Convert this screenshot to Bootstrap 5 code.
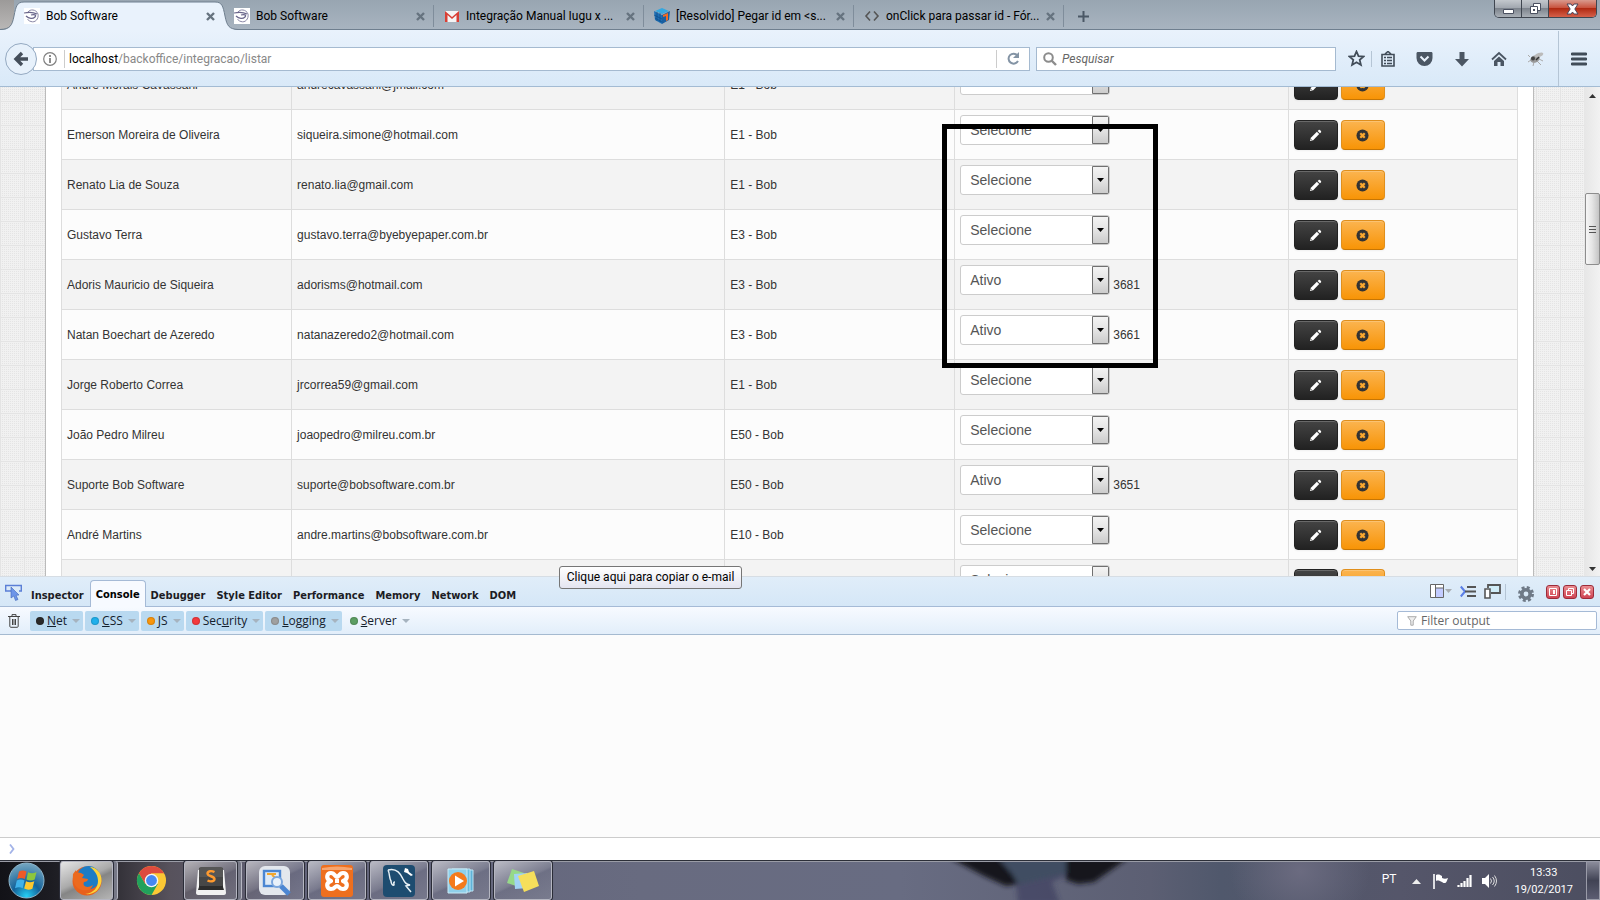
<!DOCTYPE html>
<html lang="pt-BR">
<head>
<meta charset="utf-8">
<meta name="viewport" content="width=device-width, initial-scale=1">
<title>Bob Software</title>
<link href="https://cdn.jsdelivr.net/npm/bootstrap@5.3.0/dist/css/bootstrap.min.css" rel="stylesheet">
<style>
  body { font-family: Roboto, "Open Sans", sans-serif; font-size: 12px; line-height: 16px; color: #000; }
  svg { display: block; flex: none; }
  button { font: inherit; color: inherit; }
  .plain-btn { border: 0; background: none; padding: 0; display: flex; align-items: center; justify-content: center; flex: none; }

  /* tab strip */
  .tab-strip { height: 30px; background: linear-gradient(#98a5b1, #a8b4c0); border-bottom: 1px solid #6f7f8f; padding-left: 14px; position: relative; }
  .tab-strip::before { content: ""; position: absolute; left: 0; top: 0; width: 14px; height: 29px; background: linear-gradient(#9c9a99, #b9b7b6); }
  .browser-tab { width: 210px; height: 29px; padding: 3px 9px 0 10px; gap: 6px; position: relative; }
  .browser-tab > a { color: #000; text-decoration: none; white-space: nowrap; flex: 1; min-width: 0; }
  .browser-tab.with-line::after { content: ""; position: absolute; right: 0; top: 5px; height: 22px; width: 1px; background: #7f8d9b; }
  .tab-shape { position: absolute; left: -14px; top: 0; }
  .browser-tab > a, .browser-tab > .fav, .browser-tab > button { position: relative; }
  .new-tab { width: 31px; padding-top: 3px; }
  .win-buttons { height: 18px; margin-right: 3px; border: 1px solid #3f4650; border-top: 0; border-radius: 0 0 5px 5px; overflow: hidden; }
  .win-buttons button { height: 17px; width: 27px; background: linear-gradient(#c3c8cd, #a2a8b0 45%, #7d848d 50%, #a9afb6); border-right: 1px solid #3f4650; }
  .win-buttons button:last-child { width: 47px; border: 0; background: linear-gradient(#d99a8d, #c9543f 45%, #b02a12 50%, #d5604a); }

  /* address bar */
  .nav-bar { height: 57px; background: linear-gradient(#e9f2fc, #d9e9f8); border-bottom: 1px solid #a3bbd3; padding: 1px 13px 0 5px; }
  .back-btn { width: 32px; height: 32px; border: 1px solid #94a9c1; border-radius: 50%; background: #e7f1fb; z-index: 1; }
  .url-field, .search-field { height: 24px; background: #fff; border: 1px solid #a5bad0; }
  .url-field { margin-left: -4px; padding-left: 9px; gap: 7px; }
  .search-field { width: 300px; margin-left: 6px; margin-right: 2px; padding-left: 6px; gap: 5px; }
  .url-text { color: #888; padding-left: 4px; border-left: 1px solid #ccc; height: 18px; line-height: 18px; }
  .search-field input { border: 0; outline: 0; background: none; font-style: italic; min-width: 0; padding: 0; }
  .search-field input::placeholder { color: #666; opacity: 1; }
  .reload-btn { width: 33px; height: 18px; border-left: 1px solid #ccc; }
  .tool-icon { width: 37px; height: 24px; }
  .v-line { width: 1px; height: 16px; background: #b5c5d5; }
  .v-line.beside-star { margin: 0 -3px 0 -4px; }

  /* web page */
  .viewport-area { background-color: #f1f1f1; min-height: 0; overflow: hidden;
    background-image: linear-gradient(90deg, #e4e4e4 1px, transparent 1px), linear-gradient(#e4e4e4 1px, transparent 1px), linear-gradient(90deg, transparent 1px, #f1f1f1 1px), linear-gradient(#e4e4e4 1px, transparent 1px);
    background-size: 24px 24px, 24px 24px, 2px 2px, 2px 2px; background-position: 0 14px; }
  .page-panel { background: #fff; border: solid #bbb; border-width: 0 1px; margin: 0 50px 0 45px; padding: 0 15px; overflow: hidden; min-width: 0; }
  .list-wrap { margin-top: -28px; position: relative; }
  .client-list { width: 100%; table-layout: fixed; border-collapse: separate; border-spacing: 0; border-right: 1px solid #ddd; font-family: "Liberation Sans", Arial, sans-serif; font-size: 12px; color: #333; }
  .client-list td { height: 50px; border-top: 1px solid #ddd; border-left: 1px solid #ddd; padding: 5px 5px 4px; vertical-align: middle; white-space: nowrap; }
  .client-list tr:nth-child(odd) td { background: #f3f3f3; }
  .client-list tr:nth-child(even) td { background: #fcfcfc; }
  .client-list select { width: 150px; height: 30px; margin-bottom: 10px; padding: 0 22px 0 9px; border: 1px solid #ccc; border-radius: 3px; font-family: inherit; font-size: 14px; color: #555; appearance: none;
    background: #fff url("data:image/svg+xml,%3Csvg xmlns='http://www.w3.org/2000/svg' width='18' height='28'%3E%3Cdefs%3E%3ClinearGradient id='g' x2='0' y2='1'%3E%3Cstop stop-color='%23f4f4f4'/%3E%3Cstop offset='.5' stop-color='%23e4e4e4'/%3E%3Cstop offset='1' stop-color='%23cbcbcb'/%3E%3C/linearGradient%3E%3C/defs%3E%3Cpath d='M1.500.5h16v27h-16z' fill='url(%23g)' stroke='%23707070'/%3E%3Cpath d='M6 12h7l-3.500 4z'/%3E%3C/svg%3E") right 0 center no-repeat; }
  .status-cell { display: flex; align-items: center; gap: 3px; }
  .act-btn { width: 44px; height: 30px; border-radius: 4px; display: inline-flex; align-items: center; justify-content: center; padding: 0; box-shadow: inset 0 1px 0 rgba(255,255,255,.2), 0 1px 2px rgba(0,0,0,.05); }
  .act-dark { border: 1px solid #222; background: linear-gradient(#444, #222); }
  .act-orange { margin-left: 3px; border: 1px solid #e08f1c; border-bottom-color: #c67605; background: linear-gradient(#fbb450, #f89406); }
  .marker-box { position: absolute; left: 881px; top: 65px; width: 216px; height: 244px; border: 5px solid #000; }
  .scroll-track { width: 16px; background: linear-gradient(90deg, #e6e6e6, #f2f2f2); padding: 7px 0 5px; }
  .scroll-thumb { width: 15px; height: 72px; border: 1px solid #8d8d8d; border-radius: 2px; background: linear-gradient(90deg, #f6f6f6, #e6e6e6 45%, #c4c4c4); margin-top: 95px; }

  /* developer tools */
  .dev-tabs { height: 31px; border-top: 1px solid #d6dde4; border-bottom: 1px solid #a5bad6; background: linear-gradient(#e0edf9, #d5e7f7); padding: 0 6px 0 5px; }
  .dev-tabs a { color: #1c1c24; text-decoration: none; font: bold 11px/16px "DejaVu Sans Condensed", "DejaVu Sans", sans-serif; padding: 8px 6px 0 5px; }
  .dev-tabs a.current { color: #000; background: #f7faff; border: 1px solid #a5bad6; border-bottom: 0; border-radius: 4px 4px 0 0; height: 27px; padding: 6px 5px 0 5px; align-self: flex-end; margin-bottom: -1px; }
  .red-btn { width: 14px; height: 14px; border: 1px solid #9c2b39; border-radius: 3px; background: linear-gradient(#ea8d92, #cf4453); margin-left: 3px; }
  .dev-filters { height: 28px; border-bottom: 1px solid #a5bad0; background: linear-gradient(#f7faff, #e2eefa); padding: 0 3px 0 8px; gap: 2px; font-family: "Open Sans", sans-serif; }
  .filter-btn { height: 20px; border: 0; border-radius: 2px; padding: 0 3px 0 6px; display: flex; align-items: center; background: none; color: #14202c; }
  .filter-btn.on { background: #b9d9f0; }
  .filter-btn i { width: 8px; height: 8px; border-radius: 50%; margin-right: 3px; box-shadow: inset 0 0 1px 1px rgba(0,0,0,.15); }
  .filter-btn::after { content: ""; border: 4px solid transparent; border-top-color: #a6b3bf; border-bottom: 0; margin-left: 5px; }
  .filter-field { width: 200px; height: 19px; border: 1px solid #a5bad6; border-radius: 2px; background: #fff; padding-left: 9px; gap: 4px; }
  .filter-field input { border: 0; outline: 0; padding: 0; min-width: 0; height: 16px; background: none; }
  .filter-field input::placeholder { color: #666; opacity: 1; }
  .console-out { height: 202px; background: #fcfcfc; }
  .console-in { height: 23px; border-top: 1px solid #ccc; background: #fff; padding-left: 9px; }
  .page-tip { position: absolute; left: 559px; top: -10px; width: 183px; height: 23px; line-height: 21px; text-align: center; border: 1px solid #767676; border-radius: 3px; background: linear-gradient(#fff, #e4e5f0); white-space: nowrap; }

  /* task bar */
  .task-bar { height: 40px; border-top: 1px solid #2c2f38; box-shadow: inset 0 1px 0 #9a9ca6; color: #fff; position: relative; padding-left: 8px;
    background:
      radial-gradient(ellipse 70px 60px at 1300px 10px, #6b6b80, transparent 100%),
      linear-gradient(90deg, #121217 0, #1c1c22 50px, #35333a 120px, #57525c 170px, #62637a 300px, #686b80 640px, #686c82 900px, #5c5f73 1150px, #50586c 1220px, #55566a 1400px, #4c4e60 1600px); }
  .wallpaper { position: absolute; left: 930px; top: 1px; }
  .task-btn { width: 58px; height: 39px; border: 1px solid #b5b6c1; border-radius: 3px; background: linear-gradient(155deg, rgba(255,255,255,.55), rgba(255,255,255,.14) 48%, rgba(255,255,255,.05) 52%, rgba(255,255,255,.12)); box-shadow: 0 0 0 1px #2a2c37; margin-right: 4px; }
  .task-btn.stacked { width: 53px; margin-right: 9px; box-shadow: 0 0 0 1px #2a2c37, 4px 0 0 0 #777987, 5px 0 0 0 #b5b6c1; }
  .task-btn.lit { background: linear-gradient(155deg, #e5e5e5, #aaa 45%, #858585 55%, #b5b5b5); }
  .start-btn { margin-right: 15px; }
  .chrome-btn { width: 58px; margin-right: 4px; }
  .tray { gap: 8px; }
  .clock { font-size: 11px; line-height: 17px; padding: 0 5px 0 9px; }
  .show-desk { width: 14px; height: 39px; border: 1px solid #9a9ba8; background: linear-gradient(#8b8c9b, #414354 50%, #5c5d72); }
</style>
</head>
<body class="d-flex flex-column vh-100 overflow-hidden">

<svg width="0" height="0" class="position-absolute" aria-hidden="true">
  <symbol id="i-close" viewBox="0 0 9 9"><path d="M1 1l7 7M8 1L1 8" stroke="#66737f" stroke-width="2.400"/></symbol>
  <symbol id="i-bob" viewBox="0 0 16 16"><path fill="#fff" d="M0 0h16v16H0z"/><path d="M4 4C6 1 12 1 14 6c1 5-3 9-7 7.500C5 13 4 12 3.500 11" fill="none" stroke="#8a87a6"/><path d="M0 5c5-1 9-1 13 1M2 8c3 3 7 3 9 1s-1-3-4-2" fill="none" stroke="#6a668b" stroke-width="1.200"/></symbol>
  <symbol id="i-pencil" viewBox="0 0 14 14"><path d="M1 13l1-3.500L8.500 3 11 5.500 4.500 12z" fill="#fff"/><path d="M9.300 2.200l1.200-1.200c.8-.8 3.300 1.500 2.500 2.500l-1.200 1.200z" fill="#fff"/><path d="M2 11l1 1" stroke="#333"/></symbol>
  <symbol id="i-remove" viewBox="0 0 14 14"><circle cx="7" cy="7" r="6.500" fill="#333"/><path d="M4.600 4.600l4.800 4.800M9.400 4.600L4.600 9.400" stroke="#f9a72f" stroke-width="2.400"/><circle cx="7" cy="7" r="1.800" fill="#f9a72f"/></symbol>
</svg>

<!-- tabs -->
<header class="tab-strip d-flex flex-shrink-0">
  <div class="browser-tab d-flex align-items-center">
    <svg class="tab-shape" width="244" height="30" viewBox="0 0 244 30"><path d="M0 30C10 30 12 26 14 16 16 6 17 2 24 2h191c7 0 8 4 10 14 2 10 4 13 13 14z" fill="#e9f2fc"/><path d="M0 29.500C10 29 12 26 14 16 16 6 17 2 24 2h191c7 0 8 4 10 14 2 10 4 13 13 13.500" fill="none" stroke="#6f7f8f"/></svg>
    <svg class="fav" width="16" height="16"><use href="#i-bob"/></svg><a href="#">Bob Software</a>
    <button class="plain-btn" aria-label="Fechar"><svg width="9" height="9"><use href="#i-close"/></svg></button>
  </div>
  <div class="browser-tab with-line d-flex align-items-center">
    <svg class="fav" width="16" height="16"><use href="#i-bob"/></svg><a href="#">Bob Software</a>
    <button class="plain-btn" aria-label="Fechar"><svg width="9" height="9"><use href="#i-close"/></svg></button>
  </div>
  <div class="browser-tab with-line d-flex align-items-center">
    <svg class="fav" width="16" height="16" viewBox="0 0 16 16"><path d="M1 3h14v11H1z" fill="#f4f4f4"/><path d="M1 14V3l7 6 7-6v11h-2.500V7L8 11 3.500 7v7z" fill="#d93f35"/></svg><a href="#">Integração Manual Iugu x ...</a>
    <button class="plain-btn" aria-label="Fechar"><svg width="9" height="9"><use href="#i-close"/></svg></button>
  </div>
  <div class="browser-tab with-line d-flex align-items-center">
    <svg class="fav" width="16" height="16" viewBox="0 0 16 16"><path d="M8 0l7 3-7 3-7-3z" fill="#35a7df"/><path d="M0 3l8 4v9l-7-4z" fill="#1c6fb5"/><path d="M16 3L8 7v9l7-4z" fill="#1a5fa0"/><path d="M9 7l5-2v7l-2 1V8l-3 1z" fill="#f26a21"/><path d="M0 7l8 4M1 10l7 4M3 4v9M6 5v9" stroke="#0e4c86" stroke-width=".7"/></svg><a href="#">[Resolvido] Pegar id em &lt;s...</a>
    <button class="plain-btn" aria-label="Fechar"><svg width="9" height="9"><use href="#i-close"/></svg></button>
  </div>
  <div class="browser-tab with-line d-flex align-items-center">
    <svg class="fav" width="16" height="16" viewBox="0 0 16 16"><path d="M6 3.500L2 8l4 4.500M10 3.500L14 8l-4 4.500" fill="none" stroke="#555" stroke-width="1.600"/></svg><a href="#">onClick para passar id - Fór...</a>
    <button class="plain-btn" aria-label="Fechar"><svg width="9" height="9"><use href="#i-close"/></svg></button>
  </div>
  <button class="plain-btn new-tab ms-1" aria-label="Nova aba"><svg width="11" height="11" viewBox="0 0 11 11"><path d="M5.500 0v11M0 5.500h11" stroke="#4b5866" stroke-width="2"/></svg></button>
  <div class="win-buttons d-flex ms-auto">
    <button class="plain-btn" aria-label="Minimizar"><svg width="13" height="12" viewBox="0 0 13 12"><path d="M1.500 6.500h10v4h-10z" fill="#fff" stroke="#4a5060"/></svg></button>
    <button class="plain-btn" aria-label="Restaurar"><svg width="13" height="13" viewBox="0 0 13 13"><path d="M4.500 1.500h7v7h-7z" fill="#fff" stroke="#4a5060"/><path d="M1.500 4.500h7v7h-7z" fill="#fff" stroke="#4a5060"/><path d="M4 7h2v2H4z" fill="#4a5060"/></svg></button>
    <button class="plain-btn" aria-label="Fechar janela"><svg width="13" height="12" viewBox="0 0 13 12"><path d="M1 1h4l1.500 2L8 1h4L8.800 6l3.200 5H8L6.500 9 5 11H1l3.200-5z" fill="#fff" stroke="#4a4458"/></svg></button>
  </div>
</header>

<!-- address bar -->
<nav class="nav-bar d-flex align-items-center flex-shrink-0">
  <button class="plain-btn back-btn" aria-label="Voltar"><svg width="16" height="16" viewBox="0 0 16 16"><path d="M9 2L3 8l6 6M3 8h12" fill="none" stroke="#454f5b" stroke-width="3.400"/></svg></button>
  <div class="url-field d-flex align-items-center flex-grow-1">
    <svg width="14" height="14" viewBox="0 0 14 14"><circle cx="7" cy="7" r="6.300" fill="none" stroke="#808080" stroke-width="1.200"/><path d="M7 3v2M7 6v5" stroke="#808080" stroke-width="1.800"/></svg>
    <div class="url-text flex-grow-1"><span class="text-black">localhost</span>/backoffice/integracao/listar</div>
    <button class="plain-btn reload-btn" aria-label="Recarregar"><svg width="13" height="13" viewBox="0 0 13 13"><path d="M10.500 3.500A5 5 0 1 0 11 9" fill="none" stroke="#8494a5" stroke-width="2"/><path d="M12 0v6H6z" fill="#8494a5"/></svg></button>
  </div>
  <label class="search-field d-flex align-items-center">
    <svg width="14" height="14" viewBox="0 0 14 14"><circle cx="5.500" cy="5.500" r="4.300" fill="none" stroke="#8c8c8c" stroke-width="2"/><path d="M8.500 8.500l4.500 4.500" stroke="#8c8c8c" stroke-width="2.400"/></svg>
    <input type="text" placeholder="Pesquisar" aria-label="Pesquisar">
  </label>
  <button class="plain-btn tool-icon" aria-label="Favoritar"><svg width="17" height="17" viewBox="0 0 17 17"><path d="M8.500 1.500l2 4.600 5 .5-3.800 3.300 1.200 5-4.400-2.700-4.400 2.700 1.200-5L1.500 6.600l5-.5z" fill="none" stroke="#414c58" stroke-width="1.800"/></svg></button>
  <span class="v-line beside-star"></span>
  <button class="plain-btn tool-icon" aria-label="Lista"><svg width="16" height="16" viewBox="0 0 16 16"><path d="M2 3.500h12V15H2zM5 3l3-2.500L11 3" fill="none" stroke="#414c58" stroke-width="1.600"/><path d="M4 6.500h2M7 6.500h5M4 9.500h2M7 9.500h5M4 12.500h2M7 12.500h5" stroke="#414c58" stroke-width="1.300"/></svg></button>
  <button class="plain-btn tool-icon" aria-label="Pocket"><svg width="17" height="16" viewBox="0 0 17 16"><path d="M2 1h13c1 0 1.500.5 1.500 1.500V7a8 8 0 0 1-16 0V2.500C.5 1.500 1 1 2 1z" fill="#4b5663"/><path d="M4.500 5.500l4 4 4-4" fill="none" stroke="#e9f2fc" stroke-width="2"/></svg></button>
  <button class="plain-btn tool-icon" aria-label="Downloads"><svg width="16" height="16" viewBox="0 0 16 16"><path d="M5.500 1h5v7h4.500L8 15.500 1 8h4.500z" fill="#4b5663"/></svg></button>
  <button class="plain-btn tool-icon" aria-label="Início"><svg width="16" height="16" viewBox="0 0 16 16"><path d="M1 8.500L8 2l7 6.500" fill="none" stroke="#4b5663" stroke-width="1.800"/><path d="M3 10l5-4.500 5 4.500v5H9.500v-4h-3v4H3z" fill="#4b5663"/></svg></button>
  <button class="plain-btn tool-icon" aria-label="Firebug"><svg width="16" height="14" viewBox="0 0 16 14"><path d="M2 5L0 3M3 8l-3 2M6 10l-1 4M9 9l4 4M11 7l4 2" stroke="#aaa"/><ellipse cx="7" cy="7" rx="5" ry="3.500" fill="#999" transform="rotate(-25 7 7)"/><ellipse cx="11" cy="3" rx="4.500" ry="2" fill="#bbb" transform="rotate(-20 11 3)"/><circle cx="5" cy="6.500" r="2" fill="#444"/><path d="M8 8l3-3" stroke="#333" stroke-width="1.500"/></svg></button>
  <span class="v-line h-100 ms-1 me-2"></span>
  <button class="plain-btn ms-1" aria-label="Menu"><svg width="16" height="14" viewBox="0 0 16 14"><path d="M1 2h14M1 7h14M1 12h14" stroke="#414c58" stroke-width="2.800" stroke-linecap="round"/></svg></button>
</nav>

<!-- client list -->
<main class="viewport-area d-flex flex-grow-1">
  <div class="page-panel flex-grow-1">
    <div class="list-wrap">
      <table class="client-list">
        <colgroup><col style="width:15.800%"><col style="width:29.750%"><col style="width:15.800%"><col style="width:22.900%"><col></colgroup>
        <tbody>
        <tr><td>André Morais Cavassani</td><td>andrecavassani@jmail.com</td><td>E1 - Bob</td><td><div class="status-cell"><select aria-label="Status"><option>Selecione</option></select></div></td><td><button class="act-btn act-dark" aria-label="Editar"><svg width="13" height="13"><use href="#i-pencil"/></svg></button><button class="act-btn act-orange" aria-label="Remover"><svg width="13" height="13"><use href="#i-remove"/></svg></button></td></tr>
        <tr><td>Emerson Moreira de Oliveira</td><td>siqueira.simone@hotmail.com</td><td>E1 - Bob</td><td><div class="status-cell"><select aria-label="Status"><option>Selecione</option></select></div></td><td><button class="act-btn act-dark" aria-label="Editar"><svg width="13" height="13"><use href="#i-pencil"/></svg></button><button class="act-btn act-orange" aria-label="Remover"><svg width="13" height="13"><use href="#i-remove"/></svg></button></td></tr>
        <tr><td>Renato Lia de Souza</td><td>renato.lia@gmail.com</td><td>E1 - Bob</td><td><div class="status-cell"><select aria-label="Status"><option>Selecione</option></select></div></td><td><button class="act-btn act-dark" aria-label="Editar"><svg width="13" height="13"><use href="#i-pencil"/></svg></button><button class="act-btn act-orange" aria-label="Remover"><svg width="13" height="13"><use href="#i-remove"/></svg></button></td></tr>
        <tr><td>Gustavo Terra</td><td>gustavo.terra@byebyepaper.com.br</td><td>E3 - Bob</td><td><div class="status-cell"><select aria-label="Status"><option>Selecione</option></select></div></td><td><button class="act-btn act-dark" aria-label="Editar"><svg width="13" height="13"><use href="#i-pencil"/></svg></button><button class="act-btn act-orange" aria-label="Remover"><svg width="13" height="13"><use href="#i-remove"/></svg></button></td></tr>
        <tr><td>Adoris Mauricio de Siqueira</td><td>adorisms@hotmail.com</td><td>E3 - Bob</td><td><div class="status-cell"><select aria-label="Status"><option>Ativo</option></select><span>3681</span></div></td><td><button class="act-btn act-dark" aria-label="Editar"><svg width="13" height="13"><use href="#i-pencil"/></svg></button><button class="act-btn act-orange" aria-label="Remover"><svg width="13" height="13"><use href="#i-remove"/></svg></button></td></tr>
        <tr><td>Natan Boechart de Azeredo</td><td>natanazeredo2@hotmail.com</td><td>E3 - Bob</td><td><div class="status-cell"><select aria-label="Status"><option>Ativo</option></select><span>3661</span></div></td><td><button class="act-btn act-dark" aria-label="Editar"><svg width="13" height="13"><use href="#i-pencil"/></svg></button><button class="act-btn act-orange" aria-label="Remover"><svg width="13" height="13"><use href="#i-remove"/></svg></button></td></tr>
        <tr><td>Jorge Roberto Correa</td><td>jrcorrea59@gmail.com</td><td>E1 - Bob</td><td><div class="status-cell"><select aria-label="Status"><option>Selecione</option></select></div></td><td><button class="act-btn act-dark" aria-label="Editar"><svg width="13" height="13"><use href="#i-pencil"/></svg></button><button class="act-btn act-orange" aria-label="Remover"><svg width="13" height="13"><use href="#i-remove"/></svg></button></td></tr>
        <tr><td>João Pedro Milreu</td><td>joaopedro@milreu.com.br</td><td>E50 - Bob</td><td><div class="status-cell"><select aria-label="Status"><option>Selecione</option></select></div></td><td><button class="act-btn act-dark" aria-label="Editar"><svg width="13" height="13"><use href="#i-pencil"/></svg></button><button class="act-btn act-orange" aria-label="Remover"><svg width="13" height="13"><use href="#i-remove"/></svg></button></td></tr>
        <tr><td>Suporte Bob Software</td><td>suporte@bobsoftware.com.br</td><td>E50 - Bob</td><td><div class="status-cell"><select aria-label="Status"><option>Ativo</option></select><span>3651</span></div></td><td><button class="act-btn act-dark" aria-label="Editar"><svg width="13" height="13"><use href="#i-pencil"/></svg></button><button class="act-btn act-orange" aria-label="Remover"><svg width="13" height="13"><use href="#i-remove"/></svg></button></td></tr>
        <tr><td>André Martins</td><td>andre.martins@bobsoftware.com.br</td><td>E10 - Bob</td><td><div class="status-cell"><select aria-label="Status"><option>Selecione</option></select></div></td><td><button class="act-btn act-dark" aria-label="Editar"><svg width="13" height="13"><use href="#i-pencil"/></svg></button><button class="act-btn act-orange" aria-label="Remover"><svg width="13" height="13"><use href="#i-remove"/></svg></button></td></tr>
        <tr><td></td><td></td><td></td><td><div class="status-cell"><select aria-label="Status"><option>Selecione</option></select></div></td><td><button class="act-btn act-dark" aria-label="Editar"></button><button class="act-btn act-orange" aria-label="Remover"></button></td></tr>
        </tbody>
      </table>
      <div class="marker-box"></div>
    </div>
  </div>
  <div class="scroll-track d-flex flex-column align-items-center flex-shrink-0">
    <svg width="7" height="4" viewBox="0 0 7 4"><path d="M0 4l3.500-4L7 4z" fill="#333"/></svg>
    <div class="scroll-thumb d-flex align-items-center justify-content-center"><svg width="7" height="9" viewBox="0 0 7 9"><path d="M0 1.500h7M0 4.500h7M0 7.500h7" stroke="#555"/></svg></div>
    <svg class="mt-auto" width="7" height="4" viewBox="0 0 7 4"><path d="M0 0l3.500 4L7 0z" fill="#333"/></svg>
  </div>
</main>

<!-- developer tools -->
<section class="position-relative flex-shrink-0">
  <div class="dev-tabs d-flex align-items-center">
    <button class="plain-btn me-1" aria-label="Inspecionar"><svg width="17" height="18" viewBox="0 0 17 18"><path d="M7 8H.7V2.500h15.600V8H14" fill="none" stroke="#5b7fd6" stroke-width="1.400"/><path d="M6 4l8 8-3 .3 2 4.200-2.500 1L8.800 13 6 15z" fill="#6d95e8" stroke="#4267b8" stroke-width=".6"/></svg></button>
    <a href="#">Inspector</a><a href="#" class="current">Console</a><a href="#">Debugger</a><a href="#">Style Editor</a><a href="#">Performance</a><a href="#">Memory</a><a href="#">Network</a><a href="#">DOM</a>
    <div class="d-flex align-items-center ms-auto">
      <button class="plain-btn" aria-label="Painel lateral"><svg width="22" height="15" viewBox="0 0 22 15"><path d="M.5.500h13v13H.5z" fill="#fff" stroke="#666"/><path d="M6 4h7v9H6z" fill="#c3ccff"/><path d="M5.500 1v12M6 4h8" stroke="#666"/><path d="M15 5h7l-3.500 4z" fill="#a9aeb3"/></svg></button>
      <button class="plain-btn ms-2" aria-label="Console dividido"><svg width="16" height="13" viewBox="0 0 16 13"><path d="M.8 1.500L5 6.500l-4.200 5" fill="none" stroke="#5b7fe6" stroke-width="2"/><path d="M7 2h9M5 6.500h11M7 11h9" stroke="#555" stroke-width="1.800"/></svg></button>
      <button class="plain-btn ms-2" aria-label="Modo responsivo"><svg width="17" height="15" viewBox="0 0 17 15"><path d="M4 4V1h12v8H7" fill="#d0ecf7" stroke="#555" stroke-width="1.800"/><path d="M1 5h5v9H1z" fill="#fff" stroke="#555" stroke-width="1.600"/></svg></button>
      <span class="v-line ms-1 me-2"></span>
      <button class="plain-btn ms-1 me-2 pt-1" aria-label="Opções"><svg width="16" height="16" viewBox="0 0 16 16"><circle cx="8" cy="8" r="6.500" fill="none" stroke="#6f7a87" stroke-width="3" stroke-dasharray="2.900 2.200"/><circle cx="8" cy="8" r="4.200" fill="none" stroke="#6f7a87" stroke-width="3.600"/></svg></button>
      <button class="plain-btn red-btn ms-1" aria-label="Encaixar ao lado"><svg width="10" height="10" viewBox="0 0 10 10"><path d="M1.500 1.500h7v7h-7z" fill="none" stroke="#fff"/><path d="M5 3h2v4H5z" fill="#fff"/></svg></button>
      <button class="plain-btn red-btn" aria-label="Janela separada"><svg width="10" height="10" viewBox="0 0 10 10"><path d="M3.500 3V1.500h5v5H7M1.500 3.500h5v5h-5z" fill="none" stroke="#fff"/></svg></button>
      <button class="plain-btn red-btn" aria-label="Fechar ferramentas"><svg width="8" height="8" viewBox="0 0 8 8"><path d="M1 1l6 6M7 1L1 7" stroke="#fff" stroke-width="2.200"/></svg></button>
    </div>
  </div>
  <div class="dev-filters d-flex align-items-center">
    <button class="plain-btn me-2" aria-label="Limpar"><svg width="12" height="14" viewBox="0 0 12 14"><path d="M0 2.500h12M4 2V.6h4V2M1.800 3v9.300c0 .6.400 1 1 1h6.400c.6 0 1-.4 1-1V3M4.500 5v6M6 5v6M7.500 5v6" fill="none" stroke="#444"/></svg></button>
    <button class="filter-btn on"><i style="background:#2a2a2a"></i><span><u>N</u>et</span></button>
    <button class="filter-btn on"><i style="background:#1fb0ec"></i><span><u>C</u>SS</span></button>
    <button class="filter-btn on"><i style="background:#f9960c"></i><span><u>J</u>S</span></button>
    <button class="filter-btn on"><i style="background:#f4393d"></i><span>Sec<u>u</u>rity</span></button>
    <button class="filter-btn on"><i style="background:#a0a0a0"></i><span><u>L</u>ogging</span></button>
    <button class="filter-btn"><i style="background:#5c9e63"></i><span><u>S</u>erver</span></button>
    <label class="filter-field d-flex align-items-center ms-auto"><svg width="10" height="10" viewBox="0 0 10 10"><path d="M.7.700h8.600L6.200 5v4.200H3.800V5z" fill="#eee" stroke="#aaa"/></svg><input type="text" placeholder="Filter output" aria-label="Filter output"></label>
  </div>
  <div class="console-out"></div>
  <div class="console-in d-flex align-items-center"><svg width="6" height="10" viewBox="0 0 6 10"><path d="M1 .5L4.500 5 1 9.500" fill="none" stroke="#a3b3e8" stroke-width="1.800"/></svg></div>
  <div class="page-tip">Clique aqui para copiar o e-mail</div>
</section>

<!-- task bar -->
<footer class="task-bar d-flex align-items-center flex-shrink-0">
  <svg class="wallpaper" width="240" height="38" viewBox="0 0 240 38" aria-hidden="true"><defs><filter id="soft"><feGaussianBlur stdDeviation="2.500"/></filter></defs><g filter="url(#soft)"><path d="M85 12h55l-18 8 8 22H88z" fill="#33375a" opacity=".55"/><path d="M60-4h110l-30 14-50 12-20-10z" fill="#3f4d62"/><path d="M20-4h48l14 16 6 10-12 2-22-10z" fill="#14151a"/><path d="M136-4h62l-14 10-20 14-16 2-12-4z" fill="#14151a"/></g></svg>
  <button class="plain-btn start-btn" aria-label="Iniciar"><svg width="37" height="37" viewBox="0 0 37 37"><defs><radialGradient id="orb" cx=".5" cy=".95" r=".9"><stop stop-color="#25d0f5"/><stop offset=".45" stop-color="#14629a"/><stop offset="1" stop-color="#6fa2be"/></radialGradient></defs><circle cx="18.500" cy="18.500" r="17.500" fill="url(#orb)" stroke="#8fb6cc"/><path d="M11 9.500c3-1.500 5-1.300 7.500 0l-1.700 7.500c-2.500-1.300-5-1.300-7.600 0z" fill="#ef5a28"/><path d="M20 10.300c3 1.300 5.500 1.200 8.500-.3l-1.800 7.600c-3 1.300-5.500 1.200-8.200-.1z" fill="#8cc63e"/><path d="M8.800 18.600c2.600-1.400 5.200-1.300 7.700 0l-1.800 7.600c-2.500-1.300-5-1.200-7.700 0z" fill="#3fb1ea"/><path d="M18 19.300c2.700 1.200 5.200 1.200 8.300-.1l-1.900 7.500c-3 1.300-5.400 1.200-8.200-.1z" fill="#fdc82f"/></svg></button>
  <button class="plain-btn task-btn stacked lit" aria-label="Firefox"><svg width="32" height="32" viewBox="0 0 32 32"><circle cx="16" cy="16" r="14.500" fill="#e8601c"/><circle cx="17.500" cy="12.500" r="11.500" fill="#1d7cc4"/><path d="M19 2c6 0 12 6 11.500 14C29 26 22 30 14 29c9-1 13-7 13-13 0-5-2-9-8-14z" fill="#fbd23a"/><path d="M2 9l3-4v3c3-1 6 0 8 2l-2 3 6 1c0 2-2 3-4 3-2 4 3 7 9 3-2 5-6 6-11 5-6-1-10-8-9-16z" fill="#ec6a1f"/></svg></button>
  <button class="plain-btn chrome-btn" aria-label="Chrome"><svg width="31" height="31" viewBox="0 0 32 32"><circle cx="16" cy="16" r="15" fill="#fbc834"/><path d="M3 8.500A15 15 0 0 1 29 8.500H16l-6.500 11z" fill="#dd4b3e"/><path d="M3 8.500A15 15 0 0 0 16 31l6.500-11.500H9.500z" fill="#21a15c"/><circle cx="16" cy="16" r="7" fill="#f4f4f4"/><circle cx="16" cy="16" r="5.600" fill="#4688f1"/></svg></button>
  <button class="plain-btn task-btn stacked" aria-label="Sublime Text"><svg width="32" height="32" viewBox="0 0 32 32"><path d="M3 5h26l2 23c0 1-1 2-2 2H3c-1 0-2-1-2-2z" fill="#f2f2f2"/><path d="M4 3h24v19l1 3H3l1-3z" fill="#2c2c2c"/><rect x="4" y="2" width="24" height="19" rx="2" fill="#565656"/><path d="M4 12h24v7a2 2 0 0 1-2 2H6a2 2 0 0 1-2-2z" fill="#474747"/><path d="M19.500 7c-3-1.500-7-1-7 1.500 0 3 7 2.500 7 5.500 0 2.500-4 3-7 1.500" fill="none" stroke="#ff9a2e" stroke-width="2.400"/></svg></button>
  <button class="plain-btn task-btn" aria-label="Pesquisa"><svg width="34" height="32" viewBox="0 0 34 32"><rect x="1" y="1" width="31" height="29" rx="6" fill="#e3e7ed"/><rect x="6" y="6" width="16" height="15" fill="#dfeaf6" stroke="#4c86d2" stroke-width="2.400"/><path d="M9 9h9M14 10l6 5" fill="none" stroke="#f3a62c" stroke-width="2"/><circle cx="19" cy="17" r="5" fill="#e9f1fa" stroke="#7ba6dd" stroke-width="2"/><path d="M23 21l8 8" stroke="#4c86d2" stroke-width="5"/></svg></button>
  <button class="plain-btn task-btn" aria-label="XAMPP"><svg width="32" height="32" viewBox="0 0 32 32"><rect width="32" height="32" rx="3" fill="#ee6f1f"/><path d="M1 3q15-3 30 0v2H1z" fill="#f7a56f"/><path d="M10 16C4 14 6 8 10 8c4 0 4 4 6 4s2-4 6-4 6 6 0 8c6 2 4 8 0 8-4 0-4-3-6-3s-2 3-6 3-6-6 0-8zM14 16h4" fill="none" stroke="#fff" stroke-width="4.200" stroke-linejoin="round"/></svg></button>
  <button class="plain-btn task-btn" aria-label="MySQL Workbench"><svg width="32" height="32" viewBox="0 0 32 32"><rect width="32" height="32" rx="4" fill="#1d4c70"/><path d="M5 5c7-2 12 2 15 9 2 4 3 5 7 6l-4 1 5 6M5 5c2 4 1 8 3 11 0 3 2 5 3 4 0-2-1-3 1-3" fill="none" stroke="#e8f1f6" stroke-width="1.500"/><path d="M22 3l3 1 1 3 4 3-2 1-4-3-3-1z" fill="#fff"/></svg></button>
  <button class="plain-btn task-btn" aria-label="Windows Media Player"><svg width="28" height="26" viewBox="0 0 28 26"><path d="M8 2h18v21H8z" fill="#5fb2d8" stroke="#bde4f4"/><path d="M5 1h18v23H5z" fill="#6cbcdd" stroke="#bde4f4"/><path d="M1 1h19v24H1z" fill="#8fd0ea" stroke="#c9ebf7"/><circle cx="11" cy="13" r="9" fill="#f47a1c"/><path d="M8 7.500l9 5.500-9 5.500z" fill="#fff"/></svg></button>
  <button class="plain-btn task-btn" aria-label="Notas autoadesivas"><svg width="32" height="26" viewBox="0 0 32 26"><path d="M5 1l12 4-5 14L0 15z" fill="#96d989"/><path d="M7 6l13-1 1 15-13 1z" fill="#a2d3f5"/><path d="M11 8l16-5 5 15-15 6z" fill="#f6df5b"/></svg></button>
  <div class="tray d-flex align-items-center ms-auto h-100">
    <span class="me-2 pb-1">PT</span>
    <svg class="me-1" width="9" height="6" viewBox="0 0 9 6"><path d="M0 6l4.500-5L9 6z" fill="#eee"/></svg>
    <svg width="16" height="16" viewBox="0 0 16 16"><path d="M1 1v15" stroke="#fff" stroke-width="1.600"/><path d="M3 2c3-1 4 0 6 1v6c-2-1-4-2-6-1zM9 5c2 1 4 1 6 0-1 3-2 5-3 5s-2 0-3-1z" fill="#fff"/></svg>
    <svg width="16" height="13" viewBox="0 0 16 13"><path d="M1.500 13v-2M4.500 13v-4M7.500 13V7M10.500 13V4M13.500 13V1" stroke="#fff" stroke-width="2.200"/></svg>
    <svg width="16" height="16" viewBox="0 0 16 16"><path d="M1 5h3l4-4v14l-4-4H1z" fill="#fff"/><path d="M9.500 5.500q2 2.500 0 5M11.500 4q3.500 4 0 8M13.500 2.500q4 5.500 0 11" fill="none" stroke="#ddd"/></svg>
    <div class="clock text-center">13:33<br>19/02/2017</div>
    <button class="plain-btn show-desk" aria-label="Mostrar área de trabalho"></button>
  </div>
</footer>

<script src="https://cdn.jsdelivr.net/npm/bootstrap@5.3.0/dist/js/bootstrap.bundle.min.js"></script>
</body>
</html>
